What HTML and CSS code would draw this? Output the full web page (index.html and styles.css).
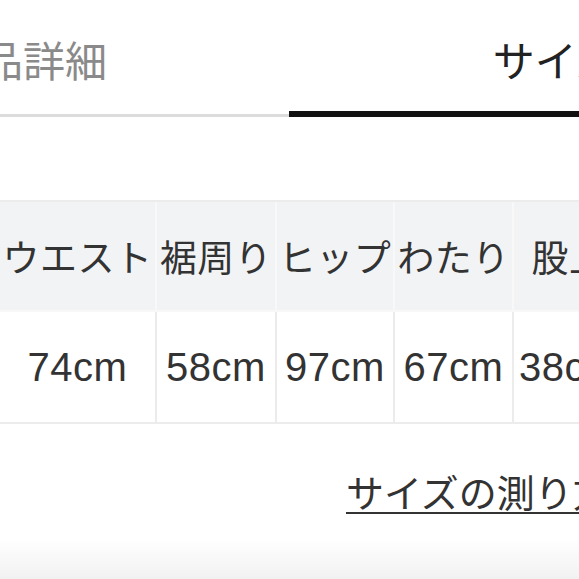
FILE: index.html
```html
<!DOCTYPE html>
<html lang="ja">
<head>
<meta charset="utf-8">
<title>サイズ</title>
<link rel="stylesheet" href="styles.css">
</head>
<body>
<div class="page">
  <nav class="tabs">
    <div class="tab">商品詳細</div>
    <div class="tab tab-active">サイズ</div>
  </nav>
  <div class="size-table">
    <div class="cell head">ウエスト</div>
    <div class="cell head">裾周り</div>
    <div class="cell head">ヒップ</div>
    <div class="cell head">わたり</div>
    <div class="cell head">股上</div>
    <div class="cell val">74cm</div>
    <div class="cell val">58cm</div>
    <div class="cell val">97cm</div>
    <div class="cell val">67cm</div>
    <div class="cell val">38cm</div>
  </div>
  <div class="link-row"><a class="guide" href="#">サイズの測り方</a></div>
  <div class="bottom-fade"></div>
</div>
</body>
</html>
```

FILE: styles.css
```css
html, body {
  margin: 0;
  padding: 0;
  background: #fff;
  overflow: hidden;
}
body {
  font-family: "Liberation Sans", "Noto Sans CJK JP", sans-serif;
  color: #333;
}
.page {
  width: 579px;
  height: 579px;
  overflow: hidden;
}
.tabs {
  display: flex;
  margin-left: -243px;
  width: 1064px;
}
.tab {
  flex: 1;
  box-sizing: border-box;
  height: 117px;
  padding-top: 42px;
  text-align: center;
  font-size: 42px;
  line-height: 42px;
  color: #8a8a8a;
  border-bottom: 3px solid #dcdcdc;
  white-space: nowrap;
}
.tab-active {
  color: #222;
  border-bottom: 6px solid #111;
}
.size-table {
  margin-top: 83px;
  display: grid;
  grid-template-columns: 157px 120px 118px 119px 112px;
  grid-auto-rows: 110px;
  width: max-content;
  border-top: 2px solid #ececec;
  border-bottom: 2px solid #ececec;
}
.cell {
  display: flex;
  align-items: center;
  justify-content: center;
  white-space: nowrap;
  border-right: 2px solid #ececec;
  color: #333;
}
.head {
  background: #f2f3f5;
  font-size: 37px;
  letter-spacing: 0.5px;
  border-right-color: #f8f8f9;
  border-bottom: 2px solid #f8f8f8;
}
.val {
  background: #fff;
  font-size: 40px;
  letter-spacing: 0.5px;
}
.link-row {
  margin-top: 51px;
  padding-left: 346px;
  white-space: nowrap;
  font-size: 38px;
  line-height: 38px;
}
.guide {
  color: #333;
  text-decoration: underline;
  text-decoration-thickness: 2px;
  text-underline-offset: 5px;
}
.bottom-fade {
  margin-top: 26px;
  height: 42px;
  background: linear-gradient(#fff, #f1f1f1);
}
```
